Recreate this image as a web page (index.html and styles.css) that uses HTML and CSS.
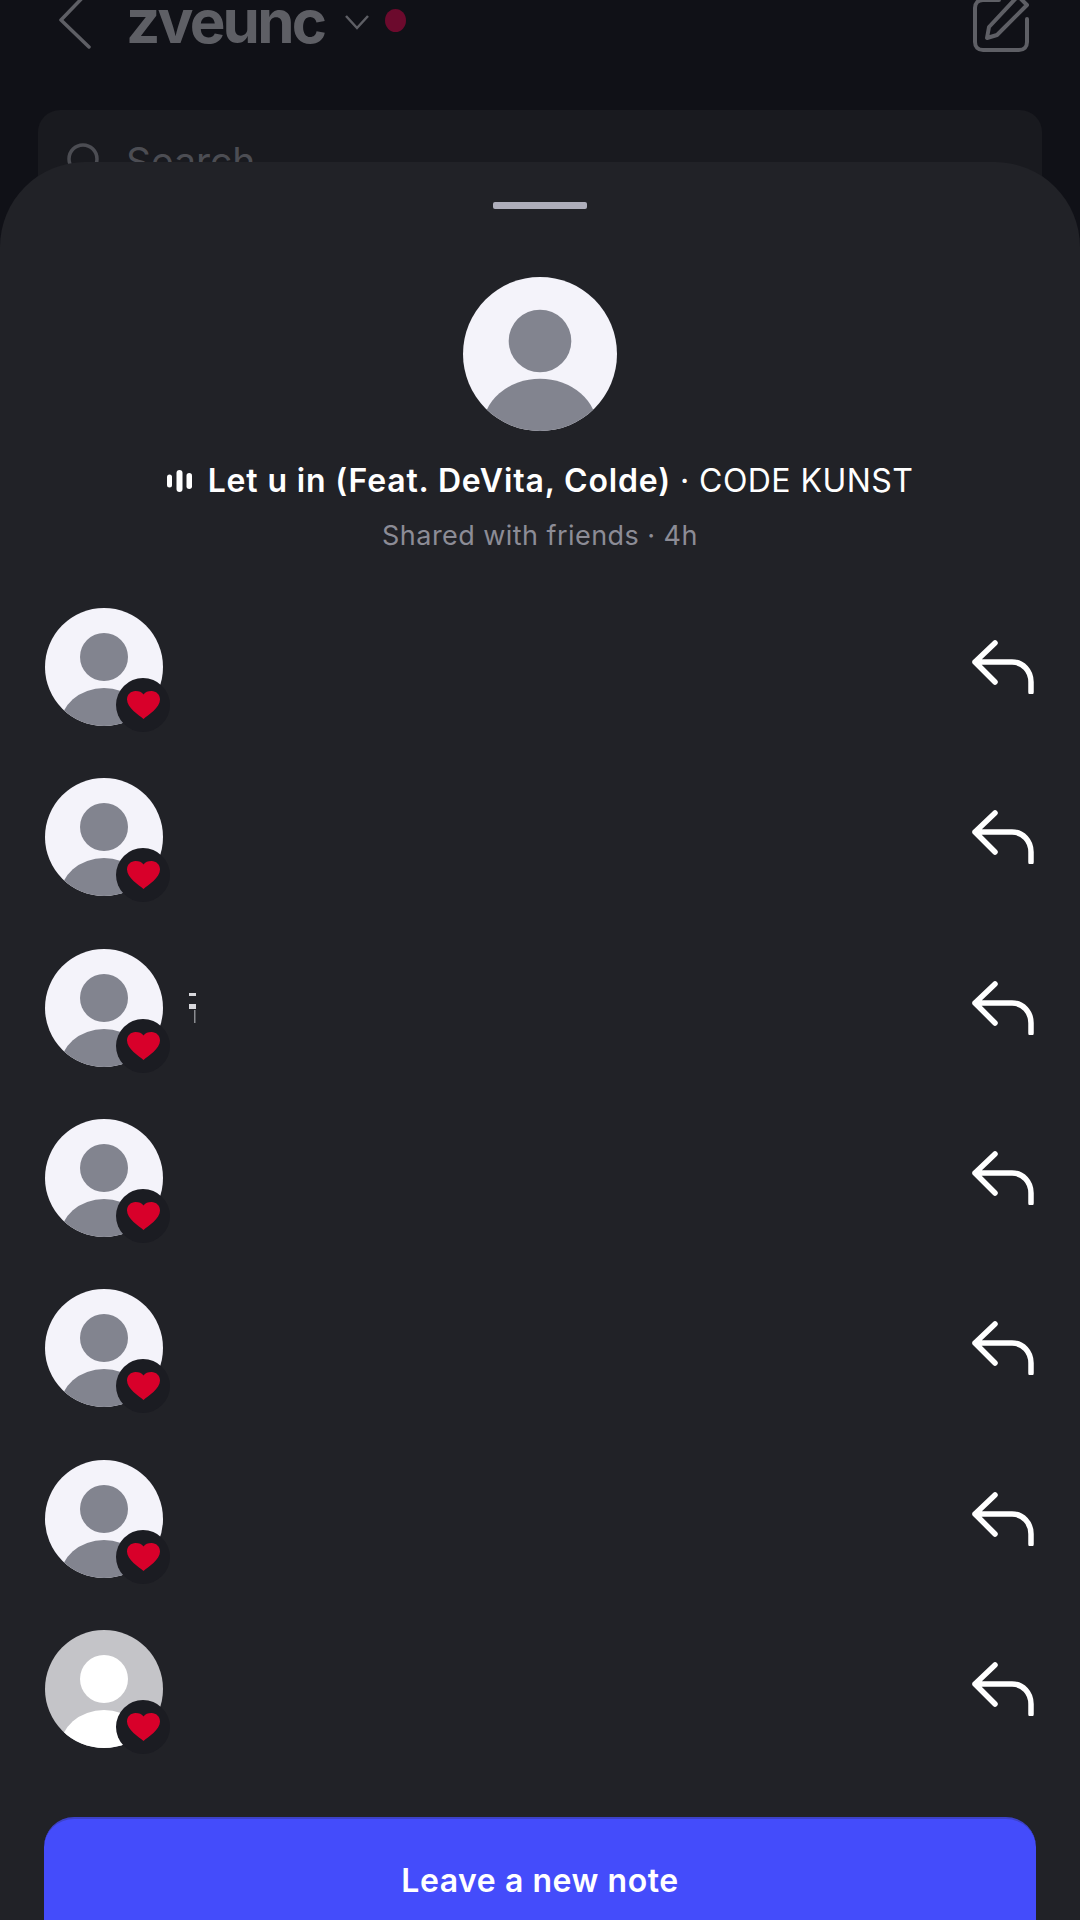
FILE: index.html
```html
<!DOCTYPE html>
<html lang="en">
<head>
  <meta charset="UTF-8" />
  <meta name="viewport" content="width=device-width, initial-scale=1" />
  <title>Notes</title>
  <link rel="stylesheet" href="styles.css">
</head>
<body>

  <svg class="icon-defs" width="0" height="0">
    <symbol id="reply" viewBox="0 0 64 54">
      <path d="M25 3 L5 22 L25 42 M5 22 H42 C53 22 61 31 61 42 V52" fill="none" stroke="currentColor" stroke-width="5.500" stroke-linecap="round" stroke-linejoin="round" />
    </symbol>
    <symbol id="heart" viewBox="0 0 33 28">
      <path d="M16.5 28 C12 24 0 17 0 8.5 C0 3.500 4 0 8.500 0 C12 0 15 1 16.500 3.500 C18 1 21 0 24.500 0 C29 0 33 3.500 33 8.500 C33 17 21 24 16.500 28 Z" fill="currentColor" />
    </symbol>
  </svg>

  <header class="topbar">
    <svg class="back" width="32" height="50" viewBox="0 0 32 50">
      <path d="M28 -8 L1 20 L29 47" fill="none" stroke="currentColor" stroke-width="3.500" stroke-linecap="round" stroke-linejoin="round" />
    </svg>
    <h1 class="username">zveunc</h1>
    <svg class="caret" width="26" height="16" viewBox="0 0 26 16">
      <path d="M2 2 L13 14 L24 2" fill="none" stroke="currentColor" stroke-width="2.500" />
    </svg>
    <span class="status-dot"></span>
    <svg class="compose" width="58" height="56" viewBox="0 0 58 56">
      <path d="M26 0 H10 C5 0 2 3 2 8 V42 C2 47 5 50 10 50 H46 C51 50 54 47 54 42 V19" fill="none" stroke="currentColor" stroke-width="4" stroke-linecap="round" />
      <path d="M14 38 L16 27 L45 -4 L54 5 L24 35 Z" fill="none" stroke="currentColor" stroke-width="4" stroke-linejoin="round" />
    </svg>
  </header>

  <div class="search-box">
    <svg class="search-icon" width="34" height="34" viewBox="0 0 34 34">
      <circle cx="17" cy="17" r="14" fill="none" stroke="currentColor" stroke-width="3.500" />
    </svg>
    <span class="search-text">Search</span>
  </div>

  <section class="sheet">
    <div class="handle"></div>

    <svg class="note-avatar" viewBox="0 0 118 118">
      <clipPath id="big-clip"><circle cx="59" cy="59" r="59" /></clipPath>
      <circle cx="59" cy="59" r="59" fill="#f4f3fa" />
      <circle cx="59" cy="49" r="24" fill="#82848f" />
      <ellipse cx="59" cy="116" rx="44" ry="38" fill="#82848f" clip-path="url(#big-clip)" />
    </svg>

    <p class="track">
      <svg class="bars" width="25" height="22" viewBox="0 0 25 22">
        <rect x="0" y="4.500" width="5" height="13" rx="2.500" />
        <rect x="9.500" y="0" width="6" height="22" rx="3" />
        <rect x="19.500" y="3" width="5.500" height="16" rx="2.750" />
      </svg>
      <strong>Let u in (Feat. DeVita, Colde)</strong>
      <span class="track-artist">· CODE KUNST</span>
    </p>
    <p class="shared">Shared with friends · 4h</p>

    <ul class="replies">
      <li class="reply-row">
        <div class="avatar">
          <span class="head"></span><span class="body"></span>
          <span class="badge"><svg width="33" height="28"><use href="#heart" /></svg></span>
        </div>
        <svg class="reply-icon" width="64" height="54"><use href="#reply" /></svg>
      </li>
      <li class="reply-row">
        <div class="avatar">
          <span class="head"></span><span class="body"></span>
          <span class="badge"><svg width="33" height="28"><use href="#heart" /></svg></span>
        </div>
        <svg class="reply-icon" width="64" height="54"><use href="#reply" /></svg>
      </li>
      <li class="reply-row">
        <div class="avatar">
          <span class="head"></span><span class="body"></span>
          <span class="badge"><svg width="33" height="28"><use href="#heart" /></svg></span>
        </div>
        <svg class="smudge" width="8" height="30" viewBox="0 0 8 30">
          <rect x="0" y="0" width="7" height="3" fill="#d8d8dc" />
          <rect x="0" y="11" width="7" height="5" fill="#d8d8dc" />
          <rect x="5" y="17" width="1.500" height="13" fill="#8a8b90" />
        </svg>
        <svg class="reply-icon" width="64" height="54"><use href="#reply" /></svg>
      </li>
      <li class="reply-row">
        <div class="avatar">
          <span class="head"></span><span class="body"></span>
          <span class="badge"><svg width="33" height="28"><use href="#heart" /></svg></span>
        </div>
        <svg class="reply-icon" width="64" height="54"><use href="#reply" /></svg>
      </li>
      <li class="reply-row">
        <div class="avatar">
          <span class="head"></span><span class="body"></span>
          <span class="badge"><svg width="33" height="28"><use href="#heart" /></svg></span>
        </div>
        <svg class="reply-icon" width="64" height="54"><use href="#reply" /></svg>
      </li>
      <li class="reply-row">
        <div class="avatar">
          <span class="head"></span><span class="body"></span>
          <span class="badge"><svg width="33" height="28"><use href="#heart" /></svg></span>
        </div>
        <svg class="reply-icon" width="64" height="54"><use href="#reply" /></svg>
      </li>
      <li class="reply-row">
        <div class="avatar avatar-grey">
          <span class="head"></span><span class="body"></span>
          <span class="badge"><svg width="33" height="28"><use href="#heart" /></svg></span>
        </div>
        <svg class="reply-icon" width="64" height="54"><use href="#reply" /></svg>
      </li>
    </ul>

    <button class="new-note">Leave a new note</button>
  </section>

</body>
</html>
```

FILE: styles.css
```css
* {
  box-sizing: border-box;
}

html,
body {
  margin: 0;
  height: 1920px;
}

body {
  position: relative;
  overflow: hidden;
  background: #101117;
  font-family: Inter, "Noto Sans", sans-serif;
}

.icon-defs {
  display: block;
  height: 0;
}

/* dimmed page behind the sheet */
.topbar {
  display: flex;
  align-items: flex-start;
  height: 110px;
  padding-left: 60px;
  color: #5e5f65;
}

.back {
  overflow: visible;
}

.username {
  margin: 1px 0 0 34px;
  font-size: 60px;
  line-height: 40px;
  font-weight: 700;
  letter-spacing: -2.800px;
}

.caret {
  margin: 14px 0 0 20px;
}

.status-dot {
  width: 21px;
  height: 23px;
  margin: 9px 0 0 15px;
  border-radius: 50%;
  background: #6c0a2d;
}

.compose {
  margin: 0 49px 0 auto;
  overflow: visible;
}

.search-box {
  display: flex;
  align-items: flex-start;
  gap: 26px;
  height: 90px;
  margin: 0 38px;
  padding: 32px 0 0 28px;
  border-radius: 22px;
  background: #191a1f;
  color: #4c4d53;
}

.search-text {
  margin-top: -3px;
  font-size: 39px;
  line-height: 46px;
}

/* bottom sheet */
.sheet {
  position: absolute;
  top: 162px;
  left: 0;
  right: 0;
  bottom: 0;
  display: flex;
  flex-direction: column;
  align-items: center;
  border-radius: 85px 85px 0 0;
  background: #212227;
  overflow: hidden;
}

.sheet > * {
  flex-shrink: 0;
}

.handle {
  width: 94px;
  height: 7px;
  margin-top: 40px;
  border-radius: 2px;
  background: #aeaeba;
}

.note-avatar {
  width: 154px;
  height: 154px;
  margin-top: 68px;
}

.track {
  display: flex;
  align-items: center;
  height: 40px;
  margin: 30px 0 0;
  font-size: 32px;
  line-height: 40px;
  color: #fff;
}

.bars {
  margin-right: 16px;
  fill: #fff;
}

.track strong {
  font-weight: 600;
  letter-spacing: 0.850px;
}

.track-artist {
  margin-left: 9px;
  font-weight: 400;
  letter-spacing: 0.450px;
}

.shared {
  margin: 16px 0 0;
  font-size: 27px;
  line-height: 38px;
  letter-spacing: 0.450px;
  color: #8c8c96;
}

.replies {
  align-self: stretch;
  margin: 27px 0 0;
  padding: 0 46px 0 45px;
  list-style: none;
}

.reply-row {
  display: flex;
  align-items: center;
  height: 170.330px;
}

.avatar {
  position: relative;
  width: 118px;
  height: 118px;
  flex-shrink: 0;
  border-radius: 50%;
  background: #f4f3fa;
}

.head {
  position: absolute;
  top: 25px;
  left: 35px;
  width: 48px;
  height: 48px;
  border-radius: 50%;
  background: #82848f;
}

.body {
  position: absolute;
  inset: 0;
  border-radius: 50%;
  overflow: hidden;
}

.body::after {
  content: "";
  position: absolute;
  top: 80px;
  left: 15px;
  width: 88px;
  height: 76px;
  border-radius: 50%;
  background: #82848f;
}

.avatar-grey {
  background: #c4c4c8;
}

.avatar-grey .head,
.avatar-grey .body::after {
  background: #fff;
}

/* heart sits on the avatar corner */
.badge {
  position: absolute;
  top: 70px;
  left: 71px;
  display: flex;
  align-items: center;
  justify-content: center;
  width: 54px;
  height: 54px;
  border-radius: 50%;
  background: #1b1c22;
  color: #d8002a;
}

.smudge {
  margin-left: 26px;
}

.reply-icon {
  margin-left: auto;
  color: #fff;
}

.new-note {
  width: 992px;
  height: 130px;
  margin-top: 43px;
  padding: 0 0 6px;
  border: none;
  border-top: 2px solid #3d42c8;
  border-radius: 30px 30px 0 0;
  background: #444cfb;
  color: #fff;
  font-family: inherit;
  font-size: 32px;
  font-weight: 600;
  letter-spacing: 0.550px;
}
```
